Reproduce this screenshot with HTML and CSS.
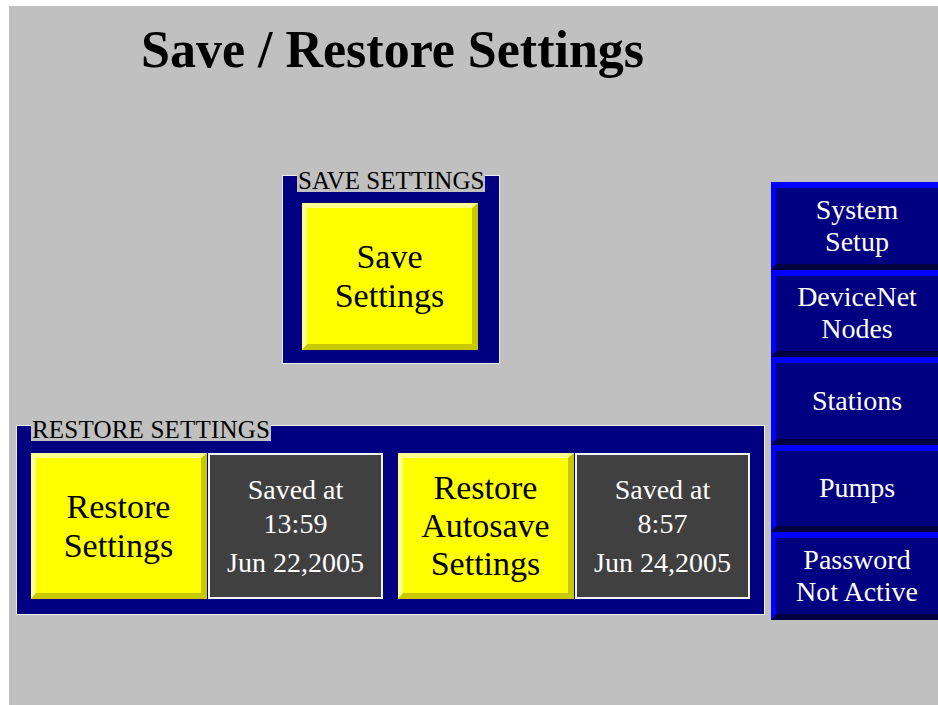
FILE: index.html
```html
<!DOCTYPE html>
<html>
<head>
    <title>Save / Restore Settings</title>
    <link rel="stylesheet" href="styles.css">
</head>
<body>
<div class="screen">
    <h1 class="title">Save / Restore Settings</h1>
    <div class="main">
        <div class="left">
            <div class="panel save-panel">
                <span class="panel-label">SAVE SETTINGS</span>
                <button class="yellow-btn">Save<br>Settings</button>
            </div>
            <div class="panel restore-panel">
                <span class="panel-label">RESTORE SETTINGS</span>
                <button class="yellow-btn">Restore<br>Settings</button>
                <div class="info-box">
                    <div>Saved at</div>
                    <div>13:59</div>
                    <div class="date">Jun 22,2005</div>
                </div>
                <button class="yellow-btn gap-left">Restore<br>Autosave<br>Settings</button>
                <div class="info-box">
                    <div>Saved at</div>
                    <div>8:57</div>
                    <div class="date">Jun 24,2005</div>
                </div>
            </div>
        </div>
        <div class="nav">
            <button class="nav-btn">System<br>Setup</button>
            <button class="nav-btn">DeviceNet<br>Nodes</button>
            <button class="nav-btn">Stations</button>
            <button class="nav-btn">Pumps</button>
            <button class="nav-btn">Password<br>Not Active</button>
        </div>
    </div>
</div>
</body>
</html>
```

FILE: styles.css
```css
* {
	box-sizing: border-box;
}

html, body {
	background-color: #fff;
	overflow: hidden;
}

body {
	margin: 6px 0 0 9px;
	font-family: "Liberation Serif", "Times New Roman", serif;
}

.screen {
	width: 929px;
	height: 699px;
	background-color: #c0c0c0;
	overflow: hidden;
}

.title {
	margin: 14px 0 0 132px;
	font-size: 52px;
	font-weight: bold;
	line-height: 60px;
	color: #000;
}

.main {
	display: flex;
}

.left {
	width: 762px;
	display: flex;
	flex-direction: column;
	align-items: flex-start;
}

.panel {
	position: relative;
	display: flex;
	background-color: #000080;
	border: 1px solid #ececec;
}

.save-panel {
	margin: 95px 0 0 273px;
	padding: 27px 21px 13px 19px;
}

.restore-panel {
	margin: 61px 0 0 7px;
	padding: 27px 14px 15px 14px;
}

.panel-label {
	position: absolute;
	left: 14px;
	top: -7px;
	padding: 0 1px;
	background-color: #c0c0c0;
	font-size: 25px;
	line-height: 23px;
	color: #000;
	white-space: nowrap;
}

.restore-panel .panel-label {
	top: -8px;
	letter-spacing: 0.2px;
}

.yellow-btn {
	width: 176px;
	height: 146px;
	padding: 0;
	background-color: #ffff00;
	border-style: solid;
	border-width: 5px 6px 6px 5px;
	border-color: #ffff90 #c8c800 #c8c800 #ffff90;
	font-family: "Liberation Serif", "Times New Roman", serif;
	font-size: 34px;
	line-height: 39px;
	color: #000;
}

.save-panel .yellow-btn {
	height: 147px;
}

.gap-left {
	margin-left: 15px;
	line-height: 38px;
}

.info-box {
	width: 175px;
	height: 146px;
	margin-left: 1px;
	display: flex;
	flex-direction: column;
	justify-content: center;
	align-items: center;
	background-color: #404040;
	border: 2px solid #f4f4f4;
	font-size: 28px;
	line-height: 34px;
	color: #fff;
}

.info-box .date {
	margin-top: 5px;
}

.nav {
	width: 167px;
	margin-top: 102px;
	display: flex;
	flex-direction: column;
}

.nav-btn {
	height: 87.5px;
	padding: 0;
	background-color: #000080;
	border-style: solid;
	border-width: 6px 0 6px 5px;
	border-color: #0000ff #000080 #000040 #0000ff;
	font-family: "Liberation Serif", "Times New Roman", serif;
	font-size: 28px;
	line-height: 32px;
	color: #fff;
}
```
